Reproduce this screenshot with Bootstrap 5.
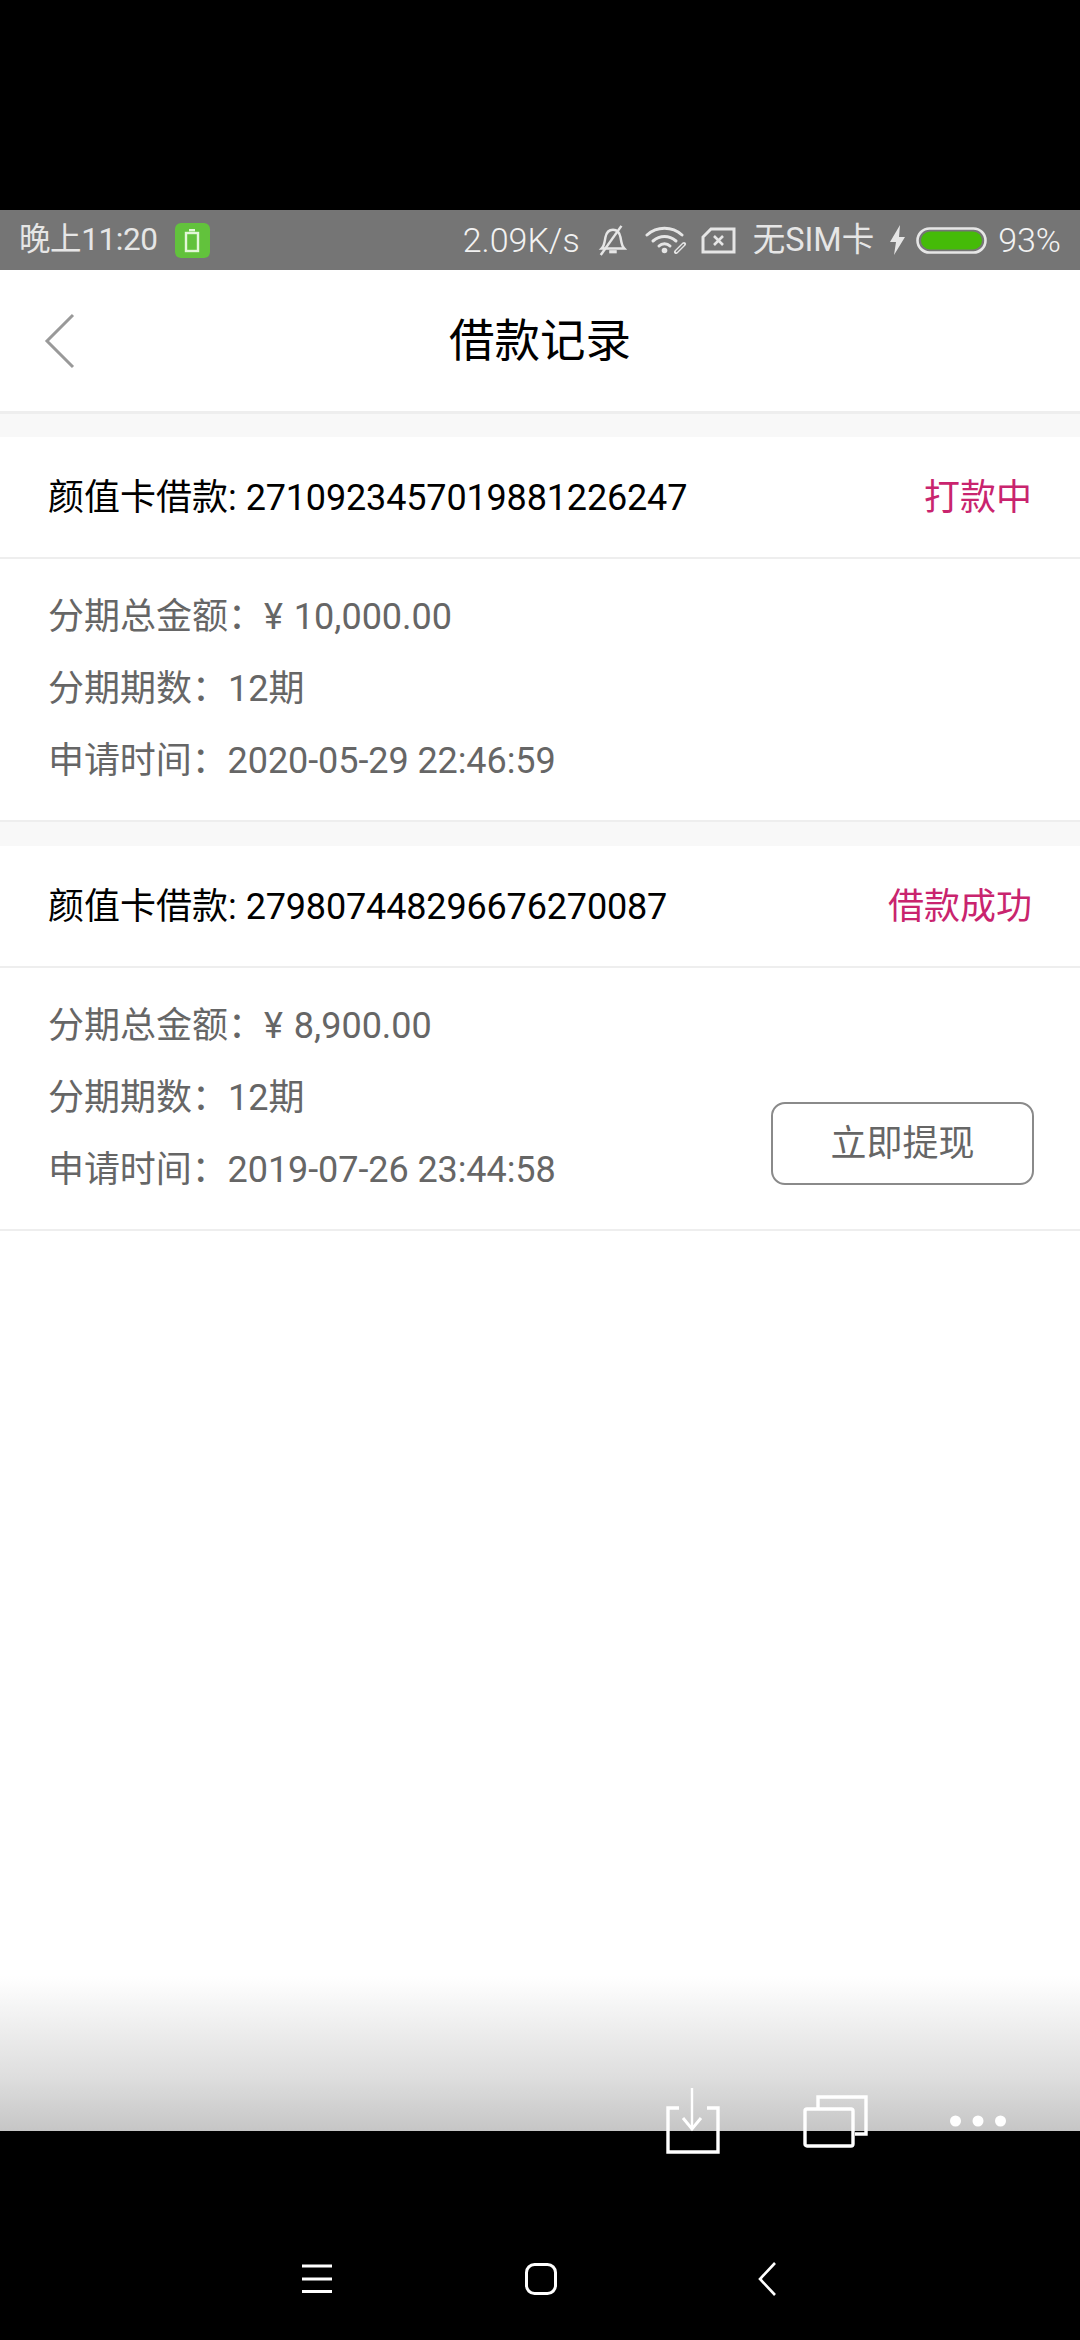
<!DOCTYPE html>
<html lang="zh-CN">
<head>
<meta charset="utf-8">
<title>借款记录</title>
<link rel="stylesheet" href="https://cdn.jsdelivr.net/npm/bootstrap@5.3.0/dist/css/bootstrap.min.css">
<style>
html,body{margin:0;background:#000;}
body{width:1080px;height:2340px;font-family:Roboto,"Noto Sans CJK SC",sans-serif;color:#000;overflow:hidden;}
.cam-top{height:210px;background:#000;}
.sys-bar{height:60px;background:#757575;color:#e6e6e6;font-size:33px;line-height:60px;padding:0 19px;}
.sys-time{font-size:31.5px;letter-spacing:-.4px;}
.sys-chip{width:35px;height:35px;border-radius:6px;background:#62c23c;margin-left:17px;}
.sys-speed{font-size:34px;font-weight:300;color:#f2f2f2;margin-right:17px;}
.sys-sim{font-size:32.5px;margin-right:16px;}
.sys-pct{font-size:34px;font-weight:300;color:#f2f2f2;}
.sys-icon{display:block;flex:none;}
.gap-bell{margin-right:17px;}
.gap-wifi{margin-right:14px;}
.gap-card{margin-right:17px;}
.gap-bolt{margin-right:11px;}
.gap-batt{margin-right:11px;}
.app-head{height:144px;background:#fff;border-bottom:3px solid #eeeeee;padding:0 44px;display:grid;grid-template-columns:1fr auto 1fr;align-items:center;}
.app-title{font-size:45.5px;line-height:60px;margin:2px 0 0;font-weight:400;}
.sep{height:23px;background:#f8f8f8;}
.sep-line{height:26px;background:#f8f8f8;border-top:2px solid #eeeeee;}
.loan-head{height:122px;padding:2px 48px 0;border-bottom:2px solid #eeeeee;font-size:36px;background:#fff;}
.loan-no{letter-spacing:-.16px;}
.loan-state{color:#c9246e;}
.loan-body{background:#fff;padding:22px 48px 23px;height:261px;color:#666;font-size:36px;line-height:72px;}
.loan-sum{word-spacing:2px;}
.loan-date{letter-spacing:-.08px;}
.loan-end{border-bottom:2px solid #eeeeee;}
.act-btn{width:263px;height:83px;border:2px solid #8a8a8a;border-radius:14px;color:#666;font-size:36px;line-height:1;background:#fff;padding:0;margin:0 -2px 21px 0;}
.blank-area{background:#fff;height:745px;}
.fade-area{height:155px;background:linear-gradient(#fff,#f2f2f2 25%,#dedede 65%,#c6c6c6);}
.bottom-black{height:210px;background:#000;}
.tool-row{position:absolute;left:660px;top:2085px;gap:78px;}
.nav-row{height:210px;padding:86px 0 0 302px;gap:193px;}
</style>
</head>
<body>
<div class="cam-top"></div>

<div class="sys-bar d-flex align-items-center">
  <span class="sys-time">晚上11:20</span>
  <span class="sys-chip d-flex align-items-center justify-content-center">
    <svg class="sys-icon" width="16" height="25" viewBox="0 0 16 25"><rect x="2" y="5" width="12" height="18" fill="none" stroke="#e3f7d8" stroke-width="2.4"/><rect x="5" y="1" width="6" height="2.4" fill="#e3f7d8"/></svg>
  </span>
  <div class="ms-auto d-flex align-items-center">
    <span class="sys-speed">2.09K/s</span>
    <svg class="sys-icon gap-bell" width="31" height="34" viewBox="0 0 33 34" fill="none" stroke="#e6e6e6" stroke-width="2.6">
      <path d="M5 26c3-3 3-7 4-12 1-5 4-8 8-8s7 3 8 8c1 5 1 9 4 12z"/><path d="M13 29.500h8" stroke-width="3.400"/><path d="M26 2 4 33"/>
    </svg>
    <svg class="sys-icon gap-wifi" width="42" height="28" viewBox="0 0 42 28" fill="none" stroke="#e6e6e6" stroke-width="3" stroke-linecap="round">
      <path d="M2 9c10-9 25-9 35 0"/><path d="M8 15c7-6 16-6 23 0"/><path d="M14 20c3-3 8-3 11 0"/><circle cx="19.500" cy="24.500" r="2.800" fill="#e6e6e6" stroke="none"/><path d="M31 26l8-8" stroke-width="4"/><path d="M31.500 25.500l7-7" stroke="#757575" stroke-width="1.400"/>
    </svg>
    <svg class="sys-icon gap-card" width="35" height="27" viewBox="0 0 35 27" fill="none" stroke="#e6e6e6" stroke-width="3">
      <path d="M10 2h23v23H2V10z"/><path d="M13 9l9 9M22 9l-9 9" stroke-width="2.600"/>
    </svg>
    <span class="sys-sim">无SIM卡</span>
    <svg class="sys-icon gap-bolt" width="15" height="30" viewBox="0 0 15 30"><path d="M10 0 0 17h6L4 30l11-18H9z" fill="#e6e6e6"/></svg>
    <svg class="sys-icon gap-batt" width="71" height="27" viewBox="0 0 71 27"><rect x="1.500" y="1.500" width="68" height="24" rx="12" fill="none" stroke="#e6e6e6" stroke-width="2.600"/><rect x="5" y="4.500" width="61" height="18" rx="9" fill="#45bb08"/></svg>
    <span class="sys-pct">93%</span>
  </div>
</div>

<header class="app-head">
  <svg class="sys-icon" width="32" height="56" viewBox="0 0 32 56" fill="none" stroke="#999" stroke-width="3"><path d="M29 2 3 28l26 26"/></svg>
  <h1 class="app-title">借款记录</h1>
  <span></span>
</header>

<div class="sep"></div>

<section>
  <div class="loan-head d-flex align-items-center justify-content-between">
    <span>颜值卡借款: <span class="loan-no">2710923457019881226247</span></span>
    <span class="loan-state">打款中</span>
  </div>
  <div class="loan-body">
    <div class="loan-sum">分期总金额：¥ 10,000.00</div>
    <div>分期期数：12期</div>
    <div class="loan-date">申请时间：2020-05-29 22:46:59</div>
  </div>
</section>

<div class="sep-line"></div>

<section class="loan-end">
  <div class="loan-head d-flex align-items-center justify-content-between">
    <span>颜值卡借款: <span class="loan-no">279807448296676270087</span></span>
    <span class="loan-state">借款成功</span>
  </div>
  <div class="loan-body d-flex justify-content-between align-items-end">
    <div>
      <div class="loan-sum">分期总金额：¥ 8,900.00</div>
      <div>分期期数：12期</div>
      <div class="loan-date">申请时间：2019-07-26 23:44:58</div>
    </div>
    <button type="button" class="btn act-btn">立即提现</button>
  </div>
</section>

<div class="blank-area"></div>
<div class="fade-area"></div>
<div class="bottom-black">
  <div class="nav-row d-flex align-items-center">
    <svg class="sys-icon" width="30" height="32" viewBox="0 0 30 32" fill="none" stroke="#fff" stroke-width="3"><path d="M0 3h30M0 16h30M0 28.500h30"/></svg>
    <svg class="sys-icon" width="32" height="32" viewBox="0 0 32 32" fill="none" stroke="#fff" stroke-width="3"><rect x="1.500" y="1.500" width="29" height="29" rx="8"/></svg>
    <svg class="sys-icon ms-2" width="18" height="34" viewBox="0 0 18 34" fill="none" stroke="#fff" stroke-width="2.600"><path d="M17 1 2 17l15 16"/></svg>
  </div>
</div>

<div class="tool-row d-flex align-items-start">
  <svg class="sys-icon" width="65" height="72" viewBox="0 0 65 72" fill="none" stroke="#fff">
    <path d="M19 23H8v44h50V23H47" stroke-width="3.400"/><path d="M32 3v40" stroke-width="2.400"/><path d="M23 33l9 11 9-11" stroke-width="3"/>
  </svg>
  <svg class="sys-icon" width="65" height="64" viewBox="0 0 65 64" fill="none" stroke="#fff" stroke-width="3.400">
    <path d="M15 23V12h48v37H52"/><rect x="2" y="24" width="48" height="37" rx="2"/>
  </svg>
  <svg class="sys-icon ms-1" width="56" height="72" viewBox="0 0 56 72" fill="#fff">
    <circle cx="5.500" cy="36" r="5.500"/><circle cx="28" cy="36" r="5.500"/><circle cx="50.500" cy="36" r="5.500"/>
  </svg>
</div>
</body>
</html>
